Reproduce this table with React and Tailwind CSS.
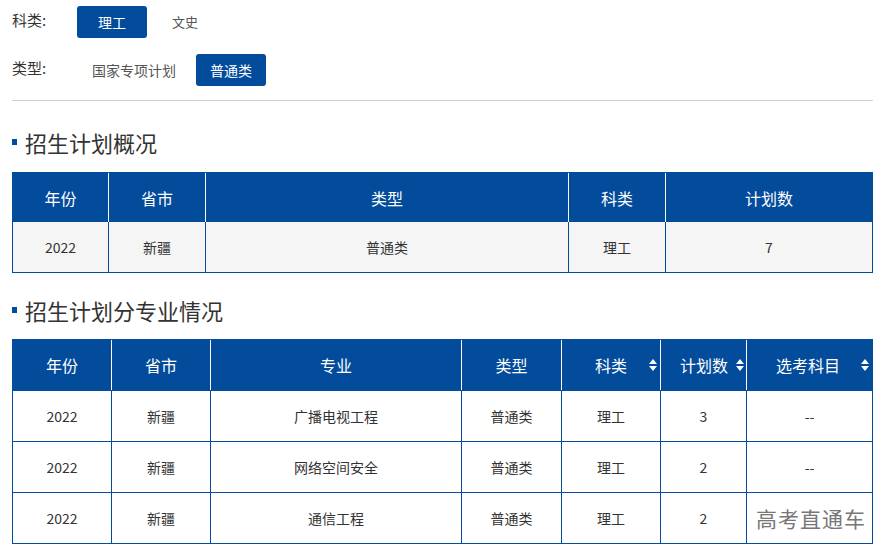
import React from 'react'

const blue = 'bg-[#034b9b]'

const SortIcon = ({ className = '' }) => (
  <svg width="8" height="12" viewBox="0 0 8 12" className={`inline-block ${className}`}>
    <path d="M4 0 L8 5 L0 5 Z" fill="white" />
    <path d="M4 12 L8 7 L0 7 Z" fill="white" />
  </svg>
)

const Heading = ({ children }) => (
  <div className="flex items-center h-[30px]">
    <div className="w-[5px] h-[6px] bg-[#034b9b] mr-[8px]"></div>
    <div className="text-[22px] text-[#333]">{children}</div>
  </div>
)

const App = () => {
  const rows = [
    ['2022', '新疆', '广播电视工程', '普通类', '理工', '3', '--'],
    ['2022', '新疆', '网络空间安全', '普通类', '理工', '2', '--'],
    ['2022', '新疆', '通信工程', '普通类', '理工', '2', ''],
  ]
  const widths2 = ['w-[99px]', 'w-[99px]', 'w-[251px]', 'w-[100px]', 'w-[99px]', 'w-[86px]', 'flex-1']
  return (
    <div
      className="w-[894px] h-[557px] bg-white relative overflow-hidden text-[#333]"
      style={{ fontFamily: '"Noto Sans CJK SC", "Noto Sans", sans-serif' }}
    >
      <div className="pl-[12px] pr-[21px]">
        {/* filters */}
        <div className="flex items-center pt-[6px] h-[38px]">
          <div className="text-[15px] w-[65px] -mt-[4px]">科类:</div>
          <div className={`${blue} text-white text-[14px] w-[70px] h-[32px] rounded-[3px] flex items-center justify-center`}>理工</div>
          <div className="text-[13px] text-[#555] ml-[25px]">文史</div>
        </div>
        <div className="flex items-center mt-[16px] h-[32px]">
          <div className="text-[15px] w-[80px] -mt-[4px]">类型:</div>
          <div className="text-[14px] text-[#555]">国家专项计划</div>
          <div className={`${blue} text-white text-[14px] w-[70px] h-[32px] rounded-[3px] flex items-center justify-center ml-[20px]`}>普通类</div>
        </div>
        <div className="h-px bg-[#d0d0d0] mt-[14px]"></div>

        {/* table 1 */}
        <div className="mt-[26px]">
          <Heading>招生计划概况</Heading>
        </div>
        <div className="mt-[15px] border border-[#034b9b]">
          <div className={`${blue} flex h-[49px] text-white text-[16px]`}>
            <div className="w-[96px] flex items-center justify-center border-r border-white">年份</div>
            <div className="w-[97px] flex items-center justify-center border-r border-white">省市</div>
            <div className="w-[363px] flex items-center justify-center border-r border-white">类型</div>
            <div className="w-[97px] flex items-center justify-center border-r border-white">科类</div>
            <div className="flex-1 flex items-center justify-center">计划数</div>
          </div>
          <div className="flex h-[50px] bg-[#f5f5f5] text-[14px]">
            <div className="w-[96px] flex items-center justify-center border-r border-[#034b9b]">2022</div>
            <div className="w-[97px] flex items-center justify-center border-r border-[#034b9b]">新疆</div>
            <div className="w-[363px] flex items-center justify-center border-r border-[#034b9b]">普通类</div>
            <div className="w-[97px] flex items-center justify-center border-r border-[#034b9b]">理工</div>
            <div className="flex-1 flex items-center justify-center">7</div>
          </div>
        </div>

        {/* table 2 */}
        <div className="mt-[22px]">
          <Heading>招生计划分专业情况</Heading>
        </div>
        <div className="mt-[14px] border border-[#034b9b]">
          <div className={`${blue} flex h-[50px] text-white text-[16px]`}>
            <div className={`${widths2[0]} flex items-center justify-center border-r border-white`}>年份</div>
            <div className={`${widths2[1]} flex items-center justify-center border-r border-white`}>省市</div>
            <div className={`${widths2[2]} flex items-center justify-center border-r border-white`}>专业</div>
            <div className={`${widths2[3]} flex items-center justify-center border-r border-white`}>类型</div>
            <div className={`${widths2[4]} flex items-center justify-end pr-[3px] border-r border-white`}>
              <span>科类</span><SortIcon className="ml-[22px]" />
            </div>
            <div className={`${widths2[5]} flex items-center justify-end pr-[2px] border-r border-white`}>
              <span>计划数</span><SortIcon className="ml-[8px]" />
            </div>
            <div className={`${widths2[6]} flex items-center justify-end pr-[3px]`}>
              <span>选考科目</span><SortIcon className="ml-[21px]" />
            </div>
          </div>
          {rows.map((r, i) => (
            <div key={i} className="flex h-[51px] text-[14px] border-t border-[#034b9b]">
              {r.map((c, j) => (
                <div
                  key={j}
                  className={`${widths2[j]} flex items-center justify-center ${j < 6 ? 'border-r border-[#034b9b]' : ''}`}
                >
                  {c}
                </div>
              ))}
            </div>
          ))}
        </div>
      </div>
      <div className="absolute left-[756px] top-[503px] text-[21px] text-[#777] tracking-[1px]">高考直通车</div>
    </div>
  )
}

export default App
